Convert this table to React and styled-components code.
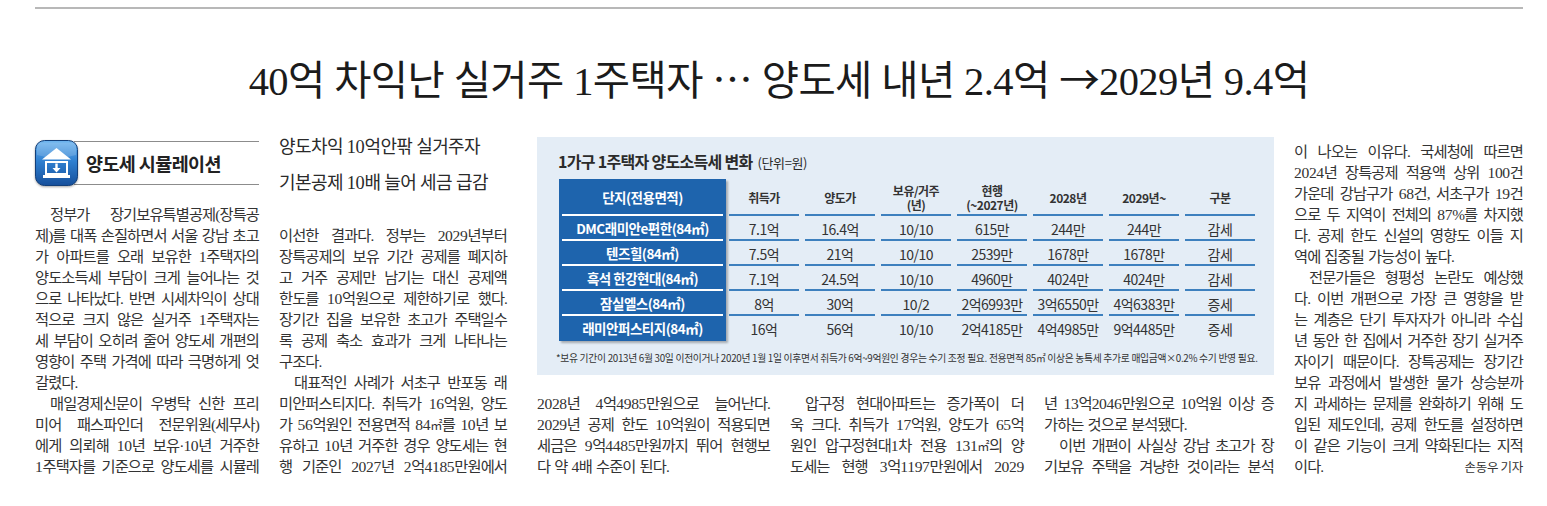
import React from "react";
import styled, { createGlobalStyle } from "styled-components";

const serif = `"Liberation Serif", "Noto Sans CJK KR", serif`;
const sans = `"Noto Sans CJK KR", "Noto Sans", sans-serif`;

const GlobalStyle = createGlobalStyle`
  html, body {
    margin: 0;
    padding: 0;
    background: #fff;
  }
  body {
    width: 1547px;
    height: 506px;
    overflow: hidden;
  }
`;

const Page = styled.div`
  width: 1488px;
  padding: 7px 24px 0 35px;
  font-family: ${serif};
  color: #333;
`;

const TopRule = styled.hr`
  margin: 0;
  border: 0;
  border-top: 2px solid #b8b8b8;
`;

const Headline = styled.h1`
  margin: 45px 0 0;
  height: 48px;
  text-align: center;
  font: 400 40.5px/48px ${serif};
  letter-spacing: -0.6px;
  color: #1b1b1b;
`;

const Symbol = styled.span`
  font-family: ${sans};
  font-weight: 400;
`;

const Body = styled.div`
  margin-top: 35px;
  display: grid;
  grid-template-columns: 224px 238px 233px 234px 230px 229px;
  grid-template-rows: 238px auto;
  column-gap: 20px;
  row-gap: 18px;
`;

const Column = styled.div`
  grid-column: ${(p) => p.$col};
  grid-row: ${(p) => p.$row};
  padding-top: ${(p) => p.$top || 0}px;
  padding-right: ${(p) => p.$right || 0}px;
`;

/* section tag with icon */
const Tag = styled.div`
  display: flex;
  align-items: center;
  margin-top: 3px;
  height: 46px;
`;

const TagLabel = styled.div`
  flex: 1;
  height: 42px;
  margin-left: -4px;
  padding-left: 12px;
  display: flex;
  align-items: center;
  border-top: 1px solid #8c8c8c;
  border-bottom: 1px solid #8c8c8c;
  font: 700 18.5px/1 ${sans};
  letter-spacing: -0.6px;
  color: #222;
`;

const IconWrap = styled.div`
  position: relative;
  z-index: 1;
  width: 43px;
  height: 46px;
  flex: none;
  filter: drop-shadow(0 1px 1px rgba(0, 0, 0, 0.35));
`;

const Deck = styled.div`
  margin: -8px 0 24px;
  height: 72px;
  font: 400 18px/36px ${serif};
  letter-spacing: -0.6px;
  color: #2a2a2a;
`;

const DeckLine = styled.div`
  height: 36px;
`;

const Text = styled.div`
  margin-top: ${(p) => p.$top || 0}px;
  font: 400 15.3px/21px ${serif};
  letter-spacing: -0.9px;
  color: #333;
`;

const Line = styled.div`
  display: flex;
  justify-content: ${(p) => (p.$end ? "flex-start" : "space-between")};
  column-gap: ${(p) => (p.$end ? 4 : 3)}px;
  height: 21px;
  padding-left: ${(p) => (p.$indent ? 15 : 0)}px;
  white-space: nowrap;
`;

const Num = styled.span`
  font-size: 1.02em;
  letter-spacing: -0.35px;
`;

const Unit = styled.span`
  font-family: ${sans};
  font-size: 0.8em;
  letter-spacing: -0.6px;
`;

const Byline = styled.span`
  font: 400 12.5px/21px ${sans};
  letter-spacing: -0.3px;
  color: #333;
`;

/* chart */
const Chart = styled.section`
  grid-column: 3 / 6;
  grid-row: 1;
  background: #e4edf6;
  padding: 14px 16px 0 22px;
`;

const ChartTitle = styled.h3`
  margin: 0 0 0 -1px;
  height: 20px;
  display: flex;
  align-items: baseline;
  font: 700 16px/20px ${sans};
  letter-spacing: -0.7px;
  color: #2b2b2b;

  small {
    margin-left: 5px;
    font-size: 13px;
    font-weight: 400;
    letter-spacing: -0.4px;
  }
`;

const Table = styled.div`
  margin-top: 8px;
  display: grid;
  grid-template-columns: 167px repeat(7, 76px);
  grid-template-rows: 37px repeat(5, 25px);
`;

const NameCell = styled.div`
  position: relative;
  display: flex;
  align-items: center;
  justify-content: center;
  background: #1e64ad;
  box-shadow: 2px 2px 2px rgba(0, 0, 0, 0.28);
  color: #fff;
  font: 700 13.5px/1 ${sans};
  letter-spacing: -0.5px;

  &::after {
    content: "";
    display: ${(p) => (p.$last ? "none" : "block")};
    position: absolute;
    left: 3px;
    right: 3px;
    bottom: 0;
    height: 2px;
    background: #fff;
  }
`;

const ValueCell = styled.div`
  position: relative;
  display: flex;
  align-items: center;
  justify-content: center;
  text-align: center;
  color: #333;
  font: ${(p) => (p.$head ? "700 12px/14px" : "400 14px/1")} ${sans};
  letter-spacing: -0.5px;

  &::after {
    content: "";
    display: ${(p) => (p.$last ? "none" : "block")};
    position: absolute;
    left: 3px;
    right: 3px;
    bottom: 0;
    height: 2px;
    background: #3d80be;
  }
`;

const Footnote = styled.p`
  margin: 10px 0 0 -3px;
  font: 400 9.8px/14px ${sans};
  letter-spacing: -0.3px;
  color: #333;
  white-space: nowrap;
`;

function HouseIcon() {
  return (
    <svg width="43" height="46" viewBox="0 0 43 46">
      <defs>
        <linearGradient id="tagGrad" x1="0" y1="0" x2="0" y2="1">
          <stop offset="0" stopColor="#6fb5ef" />
          <stop offset="0.45" stopColor="#2f80d1" />
          <stop offset="1" stopColor="#164f9b" />
        </linearGradient>
      </defs>
      <rect x="0.5" y="0.5" width="42" height="45" rx="9" fill="url(#tagGrad)" stroke="#123f7a" />
      <path d="M6 2.5 H37 Q41 2.5 41 8 V15 Q21.5 21 2 15 V8 Q2 2.5 6 2.5 Z" fill="#fff" opacity="0.16" />
      <path d="M21.5 8 L36 19.5 H7 Z" fill="#fff" />
      <rect x="11" y="22" width="21" height="12" fill="none" stroke="#fff" strokeWidth="2" />
      <line x1="21.5" y1="23.5" x2="21.5" y2="29" stroke="#fff" strokeWidth="2.4" />
      <path d="M17.5 28 H25.5 L21.5 32.5 Z" fill="#fff" />
      <rect x="8" y="35" width="27" height="3" fill="#fff" />
    </svg>
  );
}

const splitNum = (text) =>
  text.split(/(\d[\d.,]*\d|\d|㎡)/).map((part, i) => {
    if (part === "㎡") return <Unit key={i}>{part}</Unit>;
    return /^\d/.test(part) ? <Num key={i}>{part}</Num> : part;
  });

function Paragraphs({ paras }) {
  return paras.map((para, pi) =>
    para.lines.map((line, li) => {
      const isLast = li === para.lines.length - 1;
      return (
        <Line
          key={`${pi}-${li}`}
          $indent={para.indent && li === 0}
          $end={para.end && isLast && !para.byline}
        >
          {line.split(" ").map((w, wi) => (
            <span key={wi}>{splitNum(w)}</span>
          ))}
          {isLast && para.byline && <Byline>{para.byline}</Byline>}
        </Line>
      );
    })
  );
}

const col1 = [
  {
    indent: true,
    end: true,
    lines: [
      "정부가 장기보유특별공제(장특공",
      "제)를 대폭 손질하면서 서울 강남 초고",
      "가 아파트를 오래 보유한 1주택자의",
      "양도소득세 부담이 크게 늘어나는 것",
      "으로 나타났다. 반면 시세차익이 상대",
      "적으로 크지 않은 실거주 1주택자는",
      "세 부담이 오히려 줄어 양도세 개편의",
      "영향이 주택 가격에 따라 극명하게 엇",
      "갈렸다.",
    ],
  },
  {
    indent: true,
    lines: [
      "매일경제신문이 우병탁 신한 프리",
      "미어 패스파인더 전문위원(세무사)",
      "에게 의뢰해 10년 보유·10년 거주한",
      "1주택자를 기준으로 양도세를 시뮬레",
    ],
  },
];

const col2 = [
  {
    end: true,
    lines: [
      "이선한 결과다. 정부는 2029년부터",
      "장특공제의 보유 기간 공제를 폐지하",
      "고 거주 공제만 남기는 대신 공제액",
      "한도를 10억원으로 제한하기로 했다.",
      "장기간 집을 보유한 초고가 주택일수",
      "록 공제 축소 효과가 크게 나타나는",
      "구조다.",
    ],
  },
  {
    indent: true,
    lines: [
      "대표적인 사례가 서초구 반포동 래",
      "미안퍼스티지다. 취득가 16억원, 양도",
      "가 56억원인 전용면적 84㎡를 10년 보",
      "유하고 10년 거주한 경우 양도세는 현",
      "행 기준인 2027년 2억4185만원에서",
    ],
  },
];

const col3 = [
  {
    end: true,
    lines: [
      "2028년 4억4985만원으로 늘어난다.",
      "2029년 공제 한도 10억원이 적용되면",
      "세금은 9억4485만원까지 뛰어 현행보",
      "다 약 4배 수준이 된다.",
    ],
  },
];

const col4 = [
  {
    indent: true,
    lines: [
      "압구정 현대아파트는 증가폭이 더",
      "욱 크다. 취득가 17억원, 양도가 65억",
      "원인 압구정현대1차 전용 131㎡의 양",
      "도세는 현행 3억1197만원에서 2029",
    ],
  },
];

const col5 = [
  {
    end: true,
    lines: ["년 13억2046만원으로 10억원 이상 증", "가하는 것으로 분석됐다."],
  },
  {
    indent: true,
    lines: ["이번 개편이 사실상 강남 초고가 장", "기보유 주택을 겨냥한 것이라는 분석"],
  },
];

const col6 = [
  {
    end: true,
    lines: [
      "이 나오는 이유다. 국세청에 따르면",
      "2024년 장특공제 적용액 상위 100건",
      "가운데 강남구가 68건, 서초구가 19건",
      "으로 두 지역이 전체의 87%를 차지했",
      "다. 공제 한도 신설의 영향도 이들 지",
      "역에 집중될 가능성이 높다.",
    ],
  },
  {
    indent: true,
    end: true,
    byline: "손동우 기자",
    lines: [
      "전문가들은 형평성 논란도 예상했",
      "다. 이번 개편으로 가장 큰 영향을 받",
      "는 계층은 단기 투자자가 아니라 수십",
      "년 동안 한 집에서 거주한 장기 실거주",
      "자이기 때문이다. 장특공제는 장기간",
      "보유 과정에서 발생한 물가 상승분까",
      "지 과세하는 문제를 완화하기 위해 도",
      "입된 제도인데, 공제 한도를 설정하면",
      "이 같은 기능이 크게 약화된다는 지적",
      "이다.",
    ],
  },
];

const headers = [
  "취득가",
  "양도가",
  ["보유/거주", "(년)"],
  ["현행", "(~2027년)"],
  "2028년",
  "2029년~",
  "구분",
];

const rows = [
  ["DMC래미안e편한(84㎡)", "7.1억", "16.4억", "10/10", "615만", "244만", "244만", "감세"],
  ["텐즈힐(84㎡)", "7.5억", "21억", "10/10", "2539만", "1678만", "1678만", "감세"],
  ["흑석 한강현대(84㎡)", "7.1억", "24.5억", "10/10", "4960만", "4024만", "4024만", "감세"],
  ["잠실엘스(84㎡)", "8억", "30억", "10/2", "2억6993만", "3억6550만", "4억6383만", "증세"],
  ["래미안퍼스티지(84㎡)", "16억", "56억", "10/10", "2억4185만", "4억4985만", "9억4485만", "증세"],
];

function TaxTable() {
  return (
    <Table>
      <NameCell>단지(전용면적)</NameCell>
      {headers.map((h, i) => (
        <ValueCell key={i} $head>
          {Array.isArray(h) ? (
            <span>
              {h[0]}
              <br />
              {h[1]}
            </span>
          ) : (
            h
          )}
        </ValueCell>
      ))}
      {rows.map((row, ri) => {
        const last = ri === rows.length - 1;
        return (
          <React.Fragment key={ri}>
            <NameCell $last={last}>{row[0]}</NameCell>
            {row.slice(1).map((v, vi) => (
              <ValueCell key={vi} $last={last}>
                {v}
              </ValueCell>
            ))}
          </React.Fragment>
        );
      })}
    </Table>
  );
}

export default function App() {
  return (
    <>
      <GlobalStyle />
      <Page>
        <TopRule />
        <Headline>
          40억 차익난 실거주 1주택자 <Symbol>…</Symbol> 양도세 내년 2.4억 <Symbol>→</Symbol>2029년 9.4억
        </Headline>
        <Body>
          <Column $col="1" $row="1 / 3">
            <Tag>
              <IconWrap>
                <HouseIcon />
              </IconWrap>
              <TagLabel>양도세 시뮬레이션</TagLabel>
            </Tag>
            <Text $top={18}>
              <Paragraphs paras={col1} />
            </Text>
          </Column>

          <Column $col="2" $row="1 / 3" $right={10}>
            <Deck>
              <DeckLine>{splitNum("양도차익 10억안팎 실거주자")}</DeckLine>
              <DeckLine>{splitNum("기본공제 10배 늘어 세금 급감")}</DeckLine>
            </Deck>
            <Text>
              <Paragraphs paras={col2} />
            </Text>
          </Column>

          <Chart>
            <ChartTitle>
              1가구 1주택자 양도소득세 변화<small>(단위=원)</small>
            </ChartTitle>
            <TaxTable />
            <Footnote>
              *보유 기간이 2013년 6월 30일 이전이거나 2020년 1월 1일 이후면서 취득가 6억~9억원인 경우는 수기 조정
              필요. 전용면적 85㎡ 이상은 농특세 추가로 매입금액×0.2% 수기 반영 필요.
            </Footnote>
          </Chart>

          <Column $col="3" $row="2">
            <Text>
              <Paragraphs paras={col3} />
            </Text>
          </Column>
          <Column $col="4" $row="2">
            <Text>
              <Paragraphs paras={col4} />
            </Text>
          </Column>
          <Column $col="5" $row="2">
            <Text>
              <Paragraphs paras={col5} />
            </Text>
          </Column>

          <Column $col="6" $row="1 / 3" $top={4}>
            <Text>
              <Paragraphs paras={col6} />
            </Text>
          </Column>
        </Body>
      </Page>
    </>
  );
}
